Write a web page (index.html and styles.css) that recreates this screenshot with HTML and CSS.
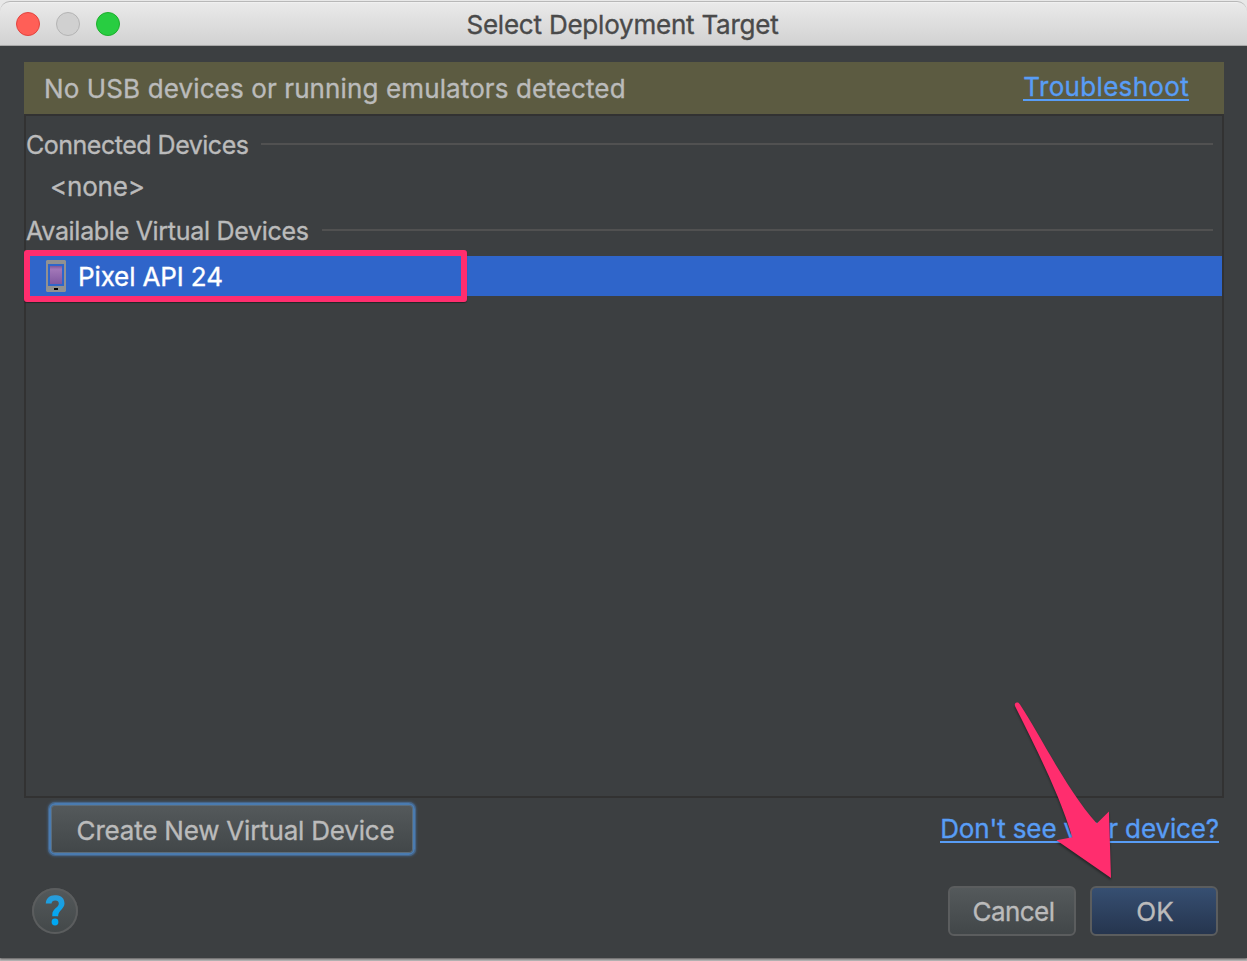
FILE: index.html
```html
<!DOCTYPE html>
<html lang="en">
<head>
<meta charset="utf-8">
<title>Select Deployment Target</title>
<link rel="stylesheet" href="styles.css">
</head>
<body>
<div class="dialog">
  <header class="titlebar">
    <div class="lights"><span class="light close"></span><span class="light minimize"></span><span class="light zoom"></span></div>
    <h1 class="title">Select Deployment Target</h1>
  </header>
  <main class="content">
    <div class="banner">
      <span class="banner-text">No USB devices or running emulators detected</span>
      <a class="link troubleshoot">Troubleshoot</a>
    </div>
    <section class="devices">
      <div class="group"><span class="group-name connected">Connected Devices</span><span class="rule"></span></div>
      <div class="none">&lt;none&gt;</div>
      <div class="group"><span class="group-name available">Available Virtual Devices</span><span class="rule"></span></div>
      <div class="device">
        <svg class="phone" width="20" height="32" viewBox="0 0 20 32">
          <defs><linearGradient id="screen" x1="0" y1="0" x2="0" y2="1"><stop offset="0" stop-color="#7f5797"/><stop offset=".18" stop-color="#a277b8"/><stop offset="1" stop-color="#8058a0"/></linearGradient></defs>
          <path fill="#919191" fill-rule="evenodd" d="M1 0H19L20 1V31L19 32H1L0 31V1ZM2 4V26H18V4Z"/>
          <path fill="url(#screen)" d="M4 6H16V24H4Z"/>
          <path fill="#000" d="M8 28H12V30H8Z"/>
        </svg>
        <span class="device-name">Pixel API 24</span>
        <span class="highlight"></span>
      </div>
    </section>
    <div class="tools">
      <button class="button create"><span>Create New Virtual Device</span></button>
      <a class="link missing">Don't see your device?</a>
    </div>
    <footer class="actions">
      <button class="help">
        <svg width="46" height="46" viewBox="0 0 46 46">
          <defs><linearGradient id="mark" x1="0" y1="0" x2="0" y2="1"><stop offset="0" stop-color="#2b9bd8"/><stop offset="1" stop-color="#00a8f3"/></linearGradient></defs>
          <path fill="url(#mark)" d="M13.8 15.5C14 10.5 17.6 7.3 22.5 7.3H24.5C29.6 7.3 32.5 11 32.5 15.4C32.5 20.3 26.2 23 26.2 27.5V28.3H20.3V26.7C20.3 20.7 26.8 19.4 26.8 15.8C26.8 13.6 25.6 12.6 23.3 12.6C21 12.6 19.8 13.7 19.5 15.6Z"/>
          <circle cx="23" cy="34" r="3.4" fill="#00a8f3"/>
        </svg>
      </button>
      <button class="button cancel"><span>Cancel</span></button>
      <button class="button ok"><span>OK</span></button>
    </footer>
  </main>
  <svg class="arrow" width="110" height="190" viewBox="0 0 110 190">
    <path fill="#ff2d6e" d="M15.2 6.5C14.2 4.2 15.2 2.8 16.8 2.6C18.2 2.4 19 3 20 4.6C40 35 68 92 96.8 123.5L108.9 111.5L111 178L56.5 140.3L72.3 137.3C60 96 38 52 15.2 6.5Z"/>
  </svg>
</div>
</body>
</html>
```
FILE: styles.css
```css
* { box-sizing: border-box; }
body { margin: 0; background: #b9b7b7; font-family: Inter, "Liberation Sans", sans-serif; font-size: 26px; color: #bbb; -webkit-text-stroke: .35px; }
.dialog { position: relative; height: 961px; overflow: hidden; display: flex; flex-direction: column; background: linear-gradient(#e8e8e8 50%, #b9b7b7 50%); }
.titlebar { height: 45px; margin-top: 1px; flex: none; display: grid; grid-template-columns: 1fr auto 1fr; align-items: center; border-top: 1px solid #b8b8b8; border-bottom: 1px solid #afafaf; border-radius: 10px 10px 0 0; background: linear-gradient(#f3f3f3, #e9e9e9 4%, #d2d2d2); }
.lights { display: flex; gap: 16px; padding-left: 16px; }
.light { width: 24px; height: 24px; border-radius: 50%; border: 1px solid; }
.close { background: #ff5f57; border-color: #e2443f; }
.minimize { background: #d0d0d0; border-color: #b4b4b4; }
.zoom { background: #28cd41; border-color: #1daf2c; }
.title { margin: 0; padding: 2px 2px 0 0; font-size: 26px; font-weight: 400; line-height: 41px; color: #4a4a4a; white-space: nowrap; letter-spacing: -.22px; }
.content { height: 912px; flex: none; padding: 16px 23px 0 24px; background: #3c3f41; box-shadow: 0 1px 2px #555; }
.banner { height: 52px; display: flex; justify-content: space-between; align-items: center; padding: 0 35px 0 20px; background: #5c5b41; white-space: nowrap; }
.banner-text { letter-spacing: .12px; padding-top: 1px; }
.link { color: #589df6; border-bottom: 2px solid #589df6; line-height: 28px; white-space: nowrap; }
.troubleshoot { margin-top: -3px; height: 28px; letter-spacing: .32px; }
.devices { height: 684px; border: 2px solid #323232; padding-top: 6px; }
.group { height: 44px; display: flex; align-items: center; gap: 13px; padding-right: 9px; font-size: 25px; white-space: nowrap; }
.group-name { line-height: 44px; padding-top: 2px; }
.connected { letter-spacing: -.49px; }
.available { letter-spacing: -.3px; }
.rule { flex: 1; height: 2px; background: #515151; }
.none { height: 42px; line-height: 42px; padding-left: 24px; letter-spacing: -.2px; }
.device { position: relative; height: 40px; margin-top: 4px; display: flex; align-items: center; gap: 12px; padding-left: 20px; background: #2f65ca; color: #fff; line-height: 40px; }
.device-name { padding-top: 2px; letter-spacing: -.13px; }
.phone { display: block; }
.highlight { position: absolute; left: -2px; top: -6px; width: 443px; height: 52px; border: 6px solid #ff2d6e; border-radius: 3px; box-shadow: 0 1px 1px #0006; }
.tools { display: flex; align-items: flex-start; justify-content: space-between; height: 88px; padding: 5px 5px 0 25px; }
.button { display: flex; align-items: center; justify-content: center; padding: 0; font: inherit; color: #bbb; border: 2px solid #5b5d5e; border-radius: 6px; background: linear-gradient(#555a5c, #414648); background-origin: border-box; white-space: nowrap; }
.create { width: 366px; height: 52px; padding: 2px 0 0 7px; letter-spacing: -.2px; border-color: #4a7bb0; box-shadow: 0 0 0 1px #46668a, 0 0 3px 1px #456486, inset 0 0 0 1px #5b6d7c; }
.missing { margin-top: 12px; height: 28px; letter-spacing: -.13px; }
.actions { display: flex; align-items: flex-start; }
.help { width: 46px; height: 46px; margin: 2px auto 0 8px; padding: 0; border: 0; border-radius: 50%; background: linear-gradient(#54595b, #434849); box-shadow: inset 0 0 0 2px #5b5d5e; }
.help svg { display: block; }
.cancel { width: 128px; height: 50px; margin-right: 14px; padding-left: 3px; letter-spacing: -.55px; }
.ok { width: 128px; height: 50px; margin-right: 6px; padding-left: 2px; background: linear-gradient(#375073, #25344d); background-origin: border-box; }
.arrow { position: absolute; left: 1000px; top: 700px; overflow: visible; filter: drop-shadow(0 2px 1px #0006); }
```
